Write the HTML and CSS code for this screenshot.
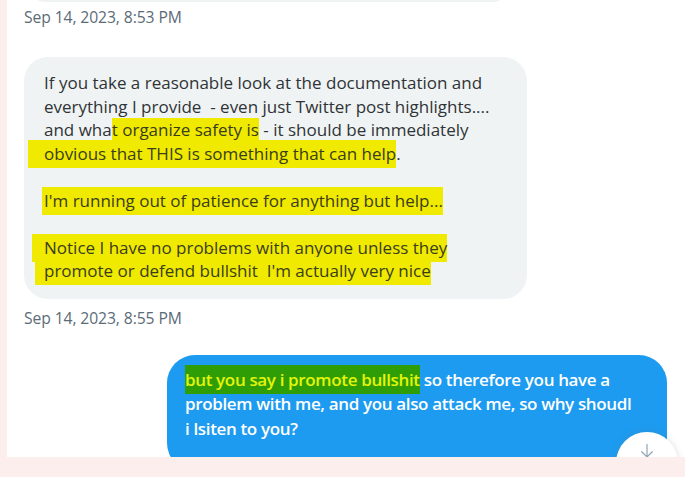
FILE: index.html
```html
<!DOCTYPE html>
<html>
<head>
<meta charset="utf-8">
<link rel="stylesheet" href="styles.css">
</head>
<body>
<div class="frame">
  <div class="convo">
    <div class="bubble prev"></div>
    <div class="stamp">Sep 14, 2023, 8:53 PM</div>
    <div class="bubble recv">
      <p>If you take a reasonable look at the documentation and<br>everything I provide&nbsp; - even just Twitter post highlights....<br>and wha<span class="hl hl-a">t organize safety is</span> - it should be immediately<br><span class="hl hl-b">obvious that THIS is something that can help</span>.</p>
      <p><span class="hl hl-c">I'm running out of patience for anything but help...</span></p>
      <p><span class="hl hl-d">Notice I have no problems with anyone unless they</span><br><span class="hl hl-e">promote or defend bullshit&nbsp; I'm actually very nice</span></p>
    </div>
    <div class="stamp stamp2">Sep 14, 2023, 8:55 PM</div>
    <div class="row-sent">
      <div class="bubble sent">
        <p><span class="hl-green">but you say i promote bullshit</span> so therefore you have a<br>problem with me, and you also attack me, so why shoudl<br>i lsiten to you?</p>
      </div>
    </div>
  </div>
  <button class="scroll-btn" aria-label="Scroll down">
    <svg viewBox="0 0 24 24" width="18" height="18"><path d="M12 3v17M5 13l7 7 7-7" fill="none" stroke="#8fa6b5" stroke-width="1.6" stroke-linecap="round"/></svg>
  </button>
</div>
<div class="bottom"></div>
</body>
</html>
```
FILE: styles.css
```css
html, body {
  margin: 0;
  padding: 0;
  background: #fff;
}
body {
  font-family: "Open Sans", "Noto Sans", sans-serif;
  width: 685px;
  height: 477px;
  overflow: hidden;
}
.frame {
  position: relative;
  height: 457px;
  overflow: hidden;
  border-left: 7px solid #fdeeee;
  background: #fff;
}
.convo {
  padding: 0 18px 0 17px;
  display: flex;
  flex-direction: column;
}
.bubble {
  border-radius: 24px;
}
.prev {
  width: 486px;
  height: 40px;
  margin-top: -38px;
  margin-left: 2px;
  background: #f0f3f4;
}
.stamp {
  font-size: 15.7px;
  line-height: 20px;
  color: #5b6b77;
  margin-top: 5px;
  letter-spacing: -0.1px;
}
.recv {
  margin-top: 30px;
  width: 503px;
  box-sizing: border-box;
  background: #eff3f4;
  color: #2f3336;
  padding: 14px 10px 16px 20px;
  font-size: 17px;
  line-height: 23.5px;
}
.recv p, .sent p {
  margin: 0;
}
.recv p + p {
  margin-top: 23.5px;
}
.hl {
  background: #f0ea00;
  color: #3a3d1c;
  padding: 2px 0 3px;
}
.hl-a { padding: 0 0 2px; }
.hl-b { margin-left: -16px; padding-left: 16px; }
.hl-c { margin-left: -2px; padding-left: 2px; }
.hl-d { margin-left: -12px; padding-left: 12px; }
.hl-e { margin-left: -9px; padding-left: 9px; }
.stamp2 {
  margin-top: 9px;
}
.row-sent {
  display: flex;
  justify-content: flex-end;
  margin-top: 27px;
}
.sent {
  width: 500px;
  box-sizing: border-box;
  background: #1d9bf0;
  color: #fff;
  border-radius: 28px;
  padding: 13px 8px 30px 18px;
  font-size: 17px;
  font-weight: 600;
  line-height: 24.5px;
  letter-spacing: -0.35px;
}
.hl-green {
  background: #2f9d06;
  color: #e4f50a;
  padding: 3px 0;
}
.scroll-btn {
  position: absolute;
  left: 609px;
  top: 432px;
  width: 62px;
  height: 62px;
  border-radius: 50%;
  border: none;
  background: #fff;
  box-shadow: 0 0 6px rgba(101, 119, 134, 0.25);
  display: flex;
  align-items: flex-start;
  justify-content: center;
  padding-top: 10px;
  box-sizing: border-box;
}
.bottom {
  height: 20px;
  background: #fdeeee;
}
```
